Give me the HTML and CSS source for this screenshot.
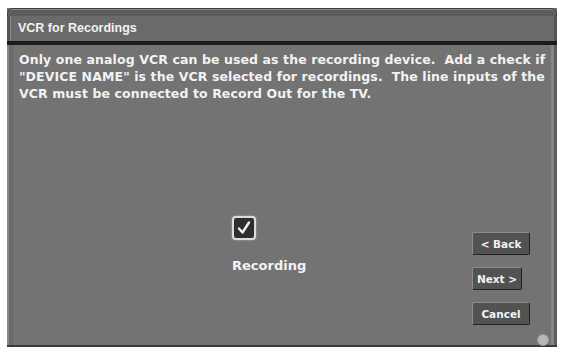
FILE: index.html
```html
<!DOCTYPE html>
<html lang="en">
<head>
  <meta charset="UTF-8">
  <title>VCR for Recordings</title>
  <link rel="stylesheet" href="styles.css">
</head>
<body>
  <div id="panel">
    <div id="panelTop"></div>
    <div id="titleBar">VCR for Recordings</div>
    <div id="titleRule"></div>
    <div id="panelBody">
      <p id="message">Only one analog VCR can be used as the recording device.&nbsp; Add a check if "DEVICE NAME" is the VCR selected for recordings.&nbsp; The line inputs of the VCR must be connected to Record Out for the TV.</p>
      <div id="lower">
        <div id="option">
          <div class="checkBox">
            <svg width="16" height="16" viewBox="0 0 16 16">
              <path d="M3 8.5 L6.5 12.5 L13 2.5" fill="none" stroke="#f2f2f2" stroke-width="2.4" stroke-linecap="round" stroke-linejoin="round"/>
            </svg>
          </div>
          <div class="optionLabel">Recording</div>
        </div>
        <div id="buttons">
          <div class="navButton">&lt; Back</div>
          <div class="navButton narrow">Next &gt;</div>
          <div class="navButton">Cancel</div>
        </div>
      </div>
      <div id="cornerDot"></div>
    </div>
  </div>
</body>
</html>
```

FILE: styles.css
```css
body {
  margin: 0;
  background: #fff;
  font-family: "DejaVu Sans", "Liberation Sans", sans-serif;
  color: #f2f2f2;
}
#panel {
  margin: 8px 5px 0 7px;
  width: 550px;
  height: 339px;
  display: flex;
  flex-direction: column;
  background: #737373;
  border-bottom: 2px solid #3a3a3a;
  box-sizing: border-box;
}
#panelTop {
  height: 7px;
  background: #5c5c5c;
  border: 1px solid #3c3c3c;
  border-bottom: none;
  border-radius: 6px 6px 0 0;
  box-shadow: inset 0 1px 0 #8a8a8a;
}
#titleBar {
  height: 25px;
  line-height: 25px;
  padding-left: 8px;
  background: #6a6a6a;
  border-left: 3px solid #555;
  border-right: 3px solid #555;
  font-family: "Liberation Sans", Arial, sans-serif;
  font-size: 12.5px;
  font-weight: bold;
  box-shadow: inset 1px 0 0 #888;
}
#titleRule {
  height: 4px;
  background: #1c1c1c;
}
#panelBody {
  flex: 1;
  display: flex;
  flex-direction: column;
  position: relative;
  padding: 6px 6px 0 10px;
  border-left: 2px solid #888;
  border-right: 3px solid #5e5e5e;
  box-shadow: inset 4px 0 0 #6a6a6a, inset -3px 0 0 #868686;
}
#message {
  margin: 0;
  font-size: 12.5px;
  letter-spacing: 0.1px;
  font-weight: bold;
  line-height: 17px;
}
#lower {
  flex: 1;
  display: flex;
  justify-content: space-between;
  align-items: flex-end;
  padding: 0 18px 20px 213px;
}
#option {
  display: flex;
  flex-direction: column;
  align-items: flex-start;
  gap: 18px;
  margin-bottom: 52px;
}
.checkBox {
  width: 20px;
  height: 20px;
  display: flex;
  align-items: center;
  justify-content: center;
  background: #2e2e2e;
  border: 2px solid #dcdcdc;
  border-radius: 4px;
  box-shadow: 0 0 2px #bbb;
}
.optionLabel {
  font-size: 13px;
  font-weight: bold;
}
#buttons {
  display: flex;
  flex-direction: column;
  align-items: flex-start;
  gap: 12px;
}
.navButton {
  width: 58px;
  height: 23px;
  line-height: 22px;
  text-align: center;
  box-sizing: border-box;
  background: #525252;
  border: 1px solid #8c8c8c;
  border-right-color: #222;
  border-bottom-color: #222;
  border-radius: 2px;
  font-size: 10.5px;
  font-weight: bold;
}
.navButton.narrow {
  width: 50px;
}
#cornerDot {
  position: absolute;
  right: 5px;
  bottom: -1px;
  width: 10px;
  height: 10px;
  border-radius: 50%;
  background: #b8b8b8;
  border: 1px solid #999;
}
```
